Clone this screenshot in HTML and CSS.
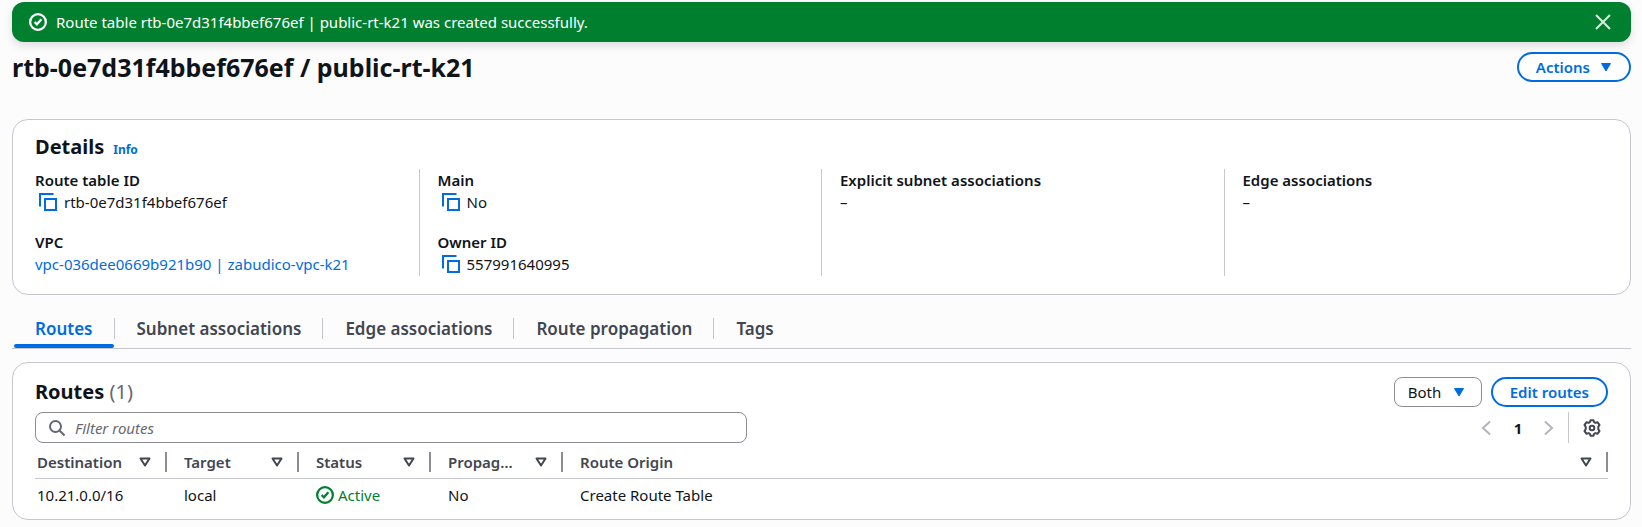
FILE: index.html
```html
<!DOCTYPE html>
<html lang="en">
<head>
<meta charset="utf-8">
<title>Route table details</title>
<meta name="viewport" content="width=device-width, initial-scale=1">
<link rel="stylesheet" href="styles.css">
</head>
<body>
<svg class="sprite" aria-hidden="true">
  <symbol id="check" viewBox="0 0 16 16"><circle cx="8" cy="8" r="7"/><path d="m5 8 2 2 4-4.500"/></symbol>
  <symbol id="copy" viewBox="0 0 18 18"><path d="M1 13.500V1h13.500"/><path d="M6 6h11v11H6z"/></symbol>
  <symbol id="caret" viewBox="0 0 12 10"><path d="M1.500 1.500h9L6 9z"/></symbol>
  <symbol id="sort" viewBox="0 0 12 10"><path d="M1.500 1.500h9L6 8.500z"/></symbol>
  <symbol id="gear" viewBox="0 0 18 18"><path d="M7.500 1.200h3l.6 2 1.300.7 2.200-.6 1.900 2.600-1.200 1.900v2.400l1.200 1.900-1.900 2.600-2.200-.6-1.300.7-.6 2h-3l-.6-2-1.300-.7-2.200.6-1.900-2.600 1.200-1.900V7.800L1.500 5.900l1.900-2.600 2.200.6 1.300-.7z" stroke-linejoin="round"/><circle cx="9" cy="9" r="2.300"/></symbol>
</svg>
<main class="page">
  <div class="flash" role="status">
    <svg class="icon icon-18"><use href="#check"/></svg>
    <span class="flash-text">Route table rtb-0e7d31f4bbef676ef | public-rt-k21 was created successfully.</span>
    <button class="icon-button" type="button" aria-label="Dismiss"><svg class="icon icon-16" viewBox="0 0 16 16"><path d="m1 1 14 14M15 1 1 15"/></svg></button>
  </div>

  <header class="page-header">
    <h1 class="page-title">rtb-0e7d31f4bbef676ef / public-rt-k21</h1>
    <button class="button" type="button">Actions <svg class="caret"><use href="#caret"/></svg></button>
  </header>

  <section class="card details">
    <div class="details-head"><h2 class="heading">Details</h2><a class="info" href="#info">Info</a></div>
    <div class="columns">
      <dl class="column">
        <div><dt>Route table ID</dt><dd><button class="icon-button copy" type="button" aria-label="Copy route table ID"><svg class="icon icon-18"><use href="#copy"/></svg></button>rtb-0e7d31f4bbef676ef</dd></div>
        <div><dt>VPC</dt><dd><a class="link" href="#vpc">vpc-036dee0669b921b90 | zabudico-vpc-k21</a></dd></div>
      </dl>
      <dl class="column">
        <div><dt>Main</dt><dd><button class="icon-button copy" type="button" aria-label="Copy main"><svg class="icon icon-18"><use href="#copy"/></svg></button>No</dd></div>
        <div><dt>Owner ID</dt><dd><button class="icon-button copy" type="button" aria-label="Copy owner ID"><svg class="icon icon-18"><use href="#copy"/></svg></button>557991640995</dd></div>
      </dl>
      <dl class="column"><div><dt>Explicit subnet associations</dt><dd>–</dd></div></dl>
      <dl class="column"><div><dt>Edge associations</dt><dd>–</dd></div></dl>
    </div>
  </section>

  <div class="tabs" role="tablist">
    <button class="tab tab-active" type="button" role="tab" aria-selected="true">Routes</button>
    <button class="tab" type="button" role="tab">Subnet associations</button>
    <button class="tab" type="button" role="tab">Edge associations</button>
    <button class="tab" type="button" role="tab">Route propagation</button>
    <button class="tab" type="button" role="tab">Tags</button>
  </div>

  <section class="card routes">
    <div class="routes-head">
      <h2 class="heading">Routes <span class="count">(1)</span></h2>
      <div class="actions">
        <div class="select-box">
          <select class="select" aria-label="Route type"><option>Both</option></select>
          <svg class="caret"><use href="#caret"/></svg>
        </div>
        <button class="button" type="button">Edit routes</button>
      </div>
    </div>
    <div class="tools">
      <label class="search">
        <svg class="icon icon-16" viewBox="0 0 16 16"><circle cx="6.500" cy="6.500" r="5.500"/><path d="m10.500 10.500 5 5"/></svg>
        <input class="search-input" type="search" placeholder="Filter routes" aria-label="Filter routes">
      </label>
      <div class="pager">
        <button class="icon-button page-arrow" type="button" aria-label="Previous page"><svg class="icon icon-16" viewBox="0 0 16 16"><path d="M11 1.500 4 8l7 6.500"/></svg></button>
        <button class="page-number" type="button">1</button>
        <button class="icon-button page-arrow" type="button" aria-label="Next page"><svg class="icon icon-16" viewBox="0 0 16 16"><path d="m4 1.500 7 6.500-7 6.500"/></svg></button>
        <div class="preferences"><button class="icon-button" type="button" aria-label="Preferences"><svg class="icon icon-18"><use href="#gear"/></svg></button></div>
      </div>
    </div>
    <table class="table">
      <colgroup><col class="col"><col class="col"><col class="col"><col class="col"><col></colgroup>
      <thead>
        <tr>
          <th><button class="sort" type="button"><span class="sort-label">Destination</span><svg class="sort-icon"><use href="#sort"/></svg></button></th>
          <th><button class="sort" type="button"><span class="sort-label">Target</span><svg class="sort-icon"><use href="#sort"/></svg></button></th>
          <th><button class="sort" type="button"><span class="sort-label">Status</span><svg class="sort-icon"><use href="#sort"/></svg></button></th>
          <th><button class="sort" type="button"><span class="sort-label">Propag…</span><svg class="sort-icon"><use href="#sort"/></svg></button></th>
          <th><button class="sort" type="button"><span class="sort-label">Route Origin</span><svg class="sort-icon"><use href="#sort"/></svg></button></th>
        </tr>
      </thead>
      <tbody>
        <tr>
          <td>10.21.0.0/16</td><td>local</td>
          <td><span class="status"><svg class="icon icon-18"><use href="#check"/></svg>Active</span></td>
          <td>No</td><td>Create Route Table</td>
        </tr>
      </tbody>
    </table>
  </section>
</main>
</body>
</html>
```

FILE: styles.css
```css
* { box-sizing: border-box; }
body { margin: 0; background: #fcfcfd; color: #0f141a; font: 15px/22px "Noto Sans", "Open Sans", sans-serif; }
h1, h2, dl, dd { margin: 0; }
button, input, select { font: inherit; color: inherit; }
a { color: #006ce0; text-decoration: none; }
.sprite { display: none; }
.page { padding: 2px 11px 6px 12px; }

.icon { display: block; flex: none; fill: none; stroke: currentColor; stroke-width: 2; }
.icon-16 { width: 16px; height: 16px; }
.icon-18 { width: 18px; height: 18px; }
.icon-button { display: flex; align-items: center; padding: 0; border: 0; background: none; }

.flash { display: flex; align-items: center; gap: 9px; height: 40px; padding: 0 20px 0 17px; border-radius: 12px; background: #00802f; color: #fff; box-shadow: 0 4px 8px rgba(0, 7, 22, 0.12); }
.flash-text { flex: 1; }
.flash .icon-button { color: #d9ecdf; }

.page-header { display: flex; align-items: flex-start; justify-content: space-between; padding: 10px 0 37px; }
.page-title { font-size: 25px; line-height: 30px; font-weight: 700; }
.button { display: flex; align-items: center; gap: 10px; height: 30px; padding: 0 17px; border: 2px solid #006ce0; border-radius: 20px; background: #fff; color: #006ce0; font-weight: 600; line-height: 20px; white-space: nowrap; }
.caret { width: 12px; height: 10px; fill: #006ce0; stroke: #006ce0; stroke-width: 1; stroke-linejoin: round; }

.card { border: 1px solid #c6c6cd; border-radius: 16px; background: #fff; }
.details { padding: 13px 22px 18px; }
.details-head { display: flex; align-items: baseline; gap: 9px; padding-bottom: 8px; }
.heading { font-size: 20px; line-height: 28px; font-weight: 700; }
.info { font-size: 12px; font-weight: 700; }
.columns { display: grid; grid-template-columns: repeat(4, 1fr); column-gap: 37px; }
.column { display: grid; align-content: start; gap: 18px; min-height: 107px; }
.column + .column { margin-left: -19px; padding-left: 18px; border-left: 1px solid #c6c6cd; }
.column dt { font-weight: 600; }
.column dd { display: flex; align-items: center; }
.copy { margin: 0 7px 0 4px; color: #006ce0; }

.tabs { display: flex; padding: 18px 0 0 1px; border-bottom: 1px solid #c6c6cd; }
.tab { position: relative; height: 35px; padding: 0 22px 4px; border: 0; background: none; color: #424650; font-size: 17px; font-weight: 600; white-space: nowrap; }
.tab:not(:last-child)::before { content: ""; position: absolute; right: 0; top: 5px; height: 21px; border-right: 1px solid #c6c6cd; }
.tab-active { color: #006ce0; }
.tab-active::after { content: ""; position: absolute; left: 1px; right: 1px; bottom: 0; height: 4px; border-radius: 2px; background: #006ce0; }

.routes { margin-top: 13px; padding: 14px 22px 8px; }
.routes-head, .tools, .actions, .pager { display: flex; align-items: center; }
.routes-head, .tools { justify-content: space-between; }
.count { color: #656871; font-weight: 400; }
.actions { gap: 9px; }
.select-box { display: grid; align-items: center; }
.select-box > * { grid-area: 1 / 1; }
.select { appearance: none; width: 88px; height: 30px; padding: 0 13px; border: 1px solid #8c8c94; border-radius: 8px; background: #fff; }
.select-box .caret { justify-self: end; margin-right: 17px; pointer-events: none; }
.tools { gap: 20px; padding-top: 5px; }
.search { display: flex; flex: 1; align-items: center; gap: 10px; max-width: 712px; height: 31px; padding: 0 13px; border: 1px solid #8c8c94; border-radius: 8px; background: #fff; color: #656871; }
.search-input { flex: 1; min-width: 0; padding: 0; border: 0; outline: 0; background: none; line-height: 20px; }
.search-input::placeholder { color: #656871; font-style: italic; opacity: 1; }
.pager { gap: 15px; }
.page-arrow { color: #b4b4bb; }
.page-number { width: 16px; padding: 0; border: 0; background: none; font-weight: 700; line-height: 20px; }
.preferences { display: flex; align-items: center; height: 31px; margin-left: -4px; padding: 0 7px 0 14px; border-left: 1px solid #c6c6cd; color: #424650; }

.table { width: 100%; table-layout: fixed; border-collapse: collapse; }
.col { width: 132px; }
.table th { padding: 9px 0 6px; border-bottom: 1px solid #c6c6cd; }
.table td { padding: 5px 0; white-space: nowrap; }
.table td:not(:first-child) { padding-left: 17px; }
.table td:first-child { padding-left: 2px; }
.sort { display: flex; align-items: center; justify-content: space-between; width: 100%; height: 20px; padding: 0 14px 0 17px; border: 0; border-right: 2px solid #8c8c94; background: none; color: #424650; font-weight: 600; line-height: 20px; }
.table th:first-child .sort { padding-left: 2px; }
.sort-icon { width: 12px; height: 10px; fill: none; stroke: currentColor; stroke-width: 2; stroke-linejoin: round; }
.status { display: flex; align-items: center; gap: 4px; color: #00802f; }
```
